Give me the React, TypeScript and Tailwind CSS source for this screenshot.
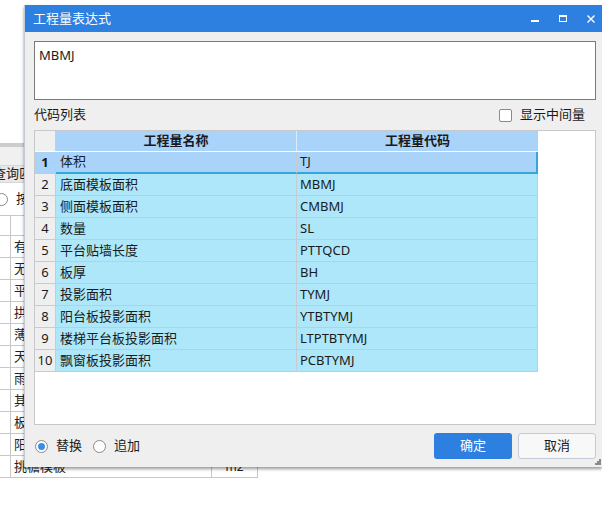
const ROWS = [
  ["体积", "TJ"],
  ["底面模板面积", "MBMJ"],
  ["侧面模板面积", "CMBMJ"],
  ["数量", "SL"],
  ["平台贴墙长度", "PTTQCD"],
  ["板厚", "BH"],
  ["投影面积", "TYMJ"],
  ["阳台板投影面积", "YTBTYMJ"],
  ["楼梯平台板投影面积", "LTPTBTYMJ"],
  ["飘窗板投影面积", "PCBTYMJ"],
] as const;

const BG_ROWS = [
  "有梁板",
  "无梁板",
  "平板",
  "拱板",
  "薄壳板",
  "天沟",
  "雨篷",
  "其他板",
  "板带",
  "阳台板",
  "挑檐模板",
];

function BackgroundPanel() {
  return (
    <div className="flex w-[258px] flex-col">
      <div className="h-[143px] bg-white" />
      <div className="h-[4px] bg-[#cdcdcd]" />
      <div className="h-[18px] bg-[#f0f0f0]" />
      <div className="flex h-[18px] items-center overflow-hidden border-y border-[#d6d6d6] bg-[#e8e8e8]">
        <span className="-ml-[7px] whitespace-nowrap text-[13px] text-[#222]">查询匹配</span>
      </div>
      <div className="flex h-[32px] items-center overflow-hidden bg-white">
        <span className="-ml-[5px] h-[13px] w-[13px] shrink-0 rounded-full border border-[#8a8a8a] bg-white" />
        <span className="ml-[8px] text-[13px] text-[#222]">按名称</span>
      </div>
      <div className="flex h-[21px] border-y border-[#c8c8c8] bg-white">
        <div className="w-[11px] border-r border-[#c8c8c8]" />
        <div className="flex-1 border-r border-[#c8c8c8]" />
        <div className="w-[46px] border-r border-[#c8c8c8]" />
      </div>
      {BG_ROWS.map((name) => (
        <div key={name} className="flex h-[22px] border-b border-[#c8c8c8] bg-white">
          <div className="w-[11px] border-r border-[#c8c8c8]" />
          <div className="flex flex-1 items-center border-r border-[#c8c8c8] pl-[3px] text-[13px] text-[#222]">
            {name}
          </div>
          <div className="flex w-[46px] items-center justify-center border-r border-[#c8c8c8] text-[12px] text-[#222]">
            m2
          </div>
        </div>
      ))}
    </div>
  );
}

function TitleBar() {
  return (
    <div className="flex h-[27px] shrink-0 items-center bg-[#2d80e0] pl-[8px] pr-[7px] text-[13px] text-white">
      <span>工程量表达式</span>
      <div className="ml-auto flex items-center gap-[20px]">
        <svg width="8" height="8" viewBox="0 0 8 8">
          <rect x="0" y="5" width="8" height="2" fill="white" />
        </svg>
        <svg width="8" height="8" viewBox="0 0 8 8">
          <rect x="0.5" y="0.5" width="7" height="6" fill="none" stroke="white" />
          <rect x="0" y="0" width="8" height="2" fill="white" />
        </svg>
        <svg width="8" height="8" viewBox="0 0 8 8">
          <path d="M0.5 0.5 L7.5 7.5 M7.5 0.5 L0.5 7.5" stroke="white" strokeWidth="1.4" />
        </svg>
      </div>
    </div>
  );
}

function CodeTable() {
  return (
    <div className="h-[295px] border border-[#c8c8c8] bg-white">
      <div className="flex h-[21px] border-b border-white">
        <div className="w-[21px] border-r border-[#c8cdd3] bg-[#f0f0f0]" />
        <div className="flex w-[241px] items-center justify-center border-r border-[#dcecfb] bg-[#aad3fa] font-bold">
          工程量名称
        </div>
        <div className="flex w-[241px] items-center justify-center bg-[#aad3fa] font-bold">
          工程量代码
        </div>
      </div>
      {ROWS.map(([name, code], i) => {
        const selected = i === 0;
        return (
          <div key={code} className="flex h-[22px]">
            <div
              className={
                selected
                  ? "flex w-[21px] items-center justify-center border-r border-b border-[#c5cbd2] bg-[#aad3fa] font-bold"
                  : "flex w-[21px] items-center justify-center border-r border-b border-[#c5cbd2] bg-[#efefef]"
              }
            >
              {i + 1}
            </div>
            <div
              className={
                selected
                  ? "flex w-[241px] items-center border-r border-b-2 border-r-[#c5cbd2] border-b-[#36a6d6] bg-[#aad3fa] pl-[4px]"
                  : "flex w-[241px] items-center border-r border-b border-[#c5cbd2] bg-[#ade7f9] pl-[4px]"
              }
            >
              {name}
            </div>
            <div
              className={
                selected
                  ? "flex w-[241px] items-center border-r-2 border-b-2 border-[#36a6d6] bg-[#aad3fa] pl-[3px]"
                  : "flex w-[241px] items-center border-r border-b border-[#c5cbd2] bg-[#ade7f9] pl-[3px]"
              }
            >
              {code}
            </div>
          </div>
        );
      })}
    </div>
  );
}

function Radio({ checked, label }: { checked?: boolean; label: string }) {
  return (
    <label className="flex items-center gap-[8px]">
      <span className="flex h-[13px] w-[13px] items-center justify-center rounded-full border border-[#8a8a8a] bg-white">
        {checked && <span className="h-[7px] w-[7px] rounded-full bg-[#3b8ee8]" />}
      </span>
      <span>{label}</span>
    </label>
  );
}

function ResizeGrip() {
  const dots = [
    [4, 0],
    [2, 2],
    [4, 2],
    [0, 4],
    [2, 4],
    [4, 4],
  ];
  return (
    <svg className="absolute right-[1px] bottom-[2px]" width="7" height="7" viewBox="0 0 7 7">
      {dots.map(([x, y]) => (
        <rect key={`${x}-${y}`} x={x + 1} y={y + 1} width="2" height="2" fill="#8a8a8a" />
      ))}
    </svg>
  );
}

export default function App() {
  return (
    <div className="relative h-[513px] w-[602px] overflow-hidden bg-white font-['Noto_Sans','Noto_Sans_CJK_SC',sans-serif] text-[13px] text-[#1a1a1a]">
      <BackgroundPanel />

      <div className="absolute top-[5px] left-[24px] flex h-[462px] w-[578px] flex-col border-l border-[#c3cad6] bg-[#efefef] shadow-[0_2px_3px_rgba(0,0,0,0.4)]">
        <TitleBar />
        <div className="flex flex-1 flex-col pt-[9px] pr-[6px] pl-[9px]">
          <div className="h-[59px] border border-[#7a7a7a] bg-white px-[4px] pt-[4px]">MBMJ</div>

          <div className="flex h-[30px] items-center justify-between">
            <span>代码列表</span>
            <label className="mr-[11px] flex items-center gap-[8px]">
              <span className="h-[13px] w-[13px] rounded-[2px] border border-[#8a8a8a] bg-white" />
              <span>显示中间量</span>
            </label>
          </div>

          <CodeTable />

          <div className="flex h-[42px] items-center">
            <div className="flex items-center gap-[11px] pl-[1px]">
              <Radio checked label="替换" />
              <Radio label="追加" />
            </div>
            <div className="ml-auto flex gap-[6px]">
              <button className="h-[26px] w-[78px] rounded-[3px] bg-[#2d80e0] text-white">确定</button>
              <button className="h-[26px] w-[78px] rounded-[3px] border border-[#c3cad8] bg-[#f8f8f8]">取消</button>
            </div>
          </div>
        </div>
        <ResizeGrip />
      </div>
    </div>
  );
}
